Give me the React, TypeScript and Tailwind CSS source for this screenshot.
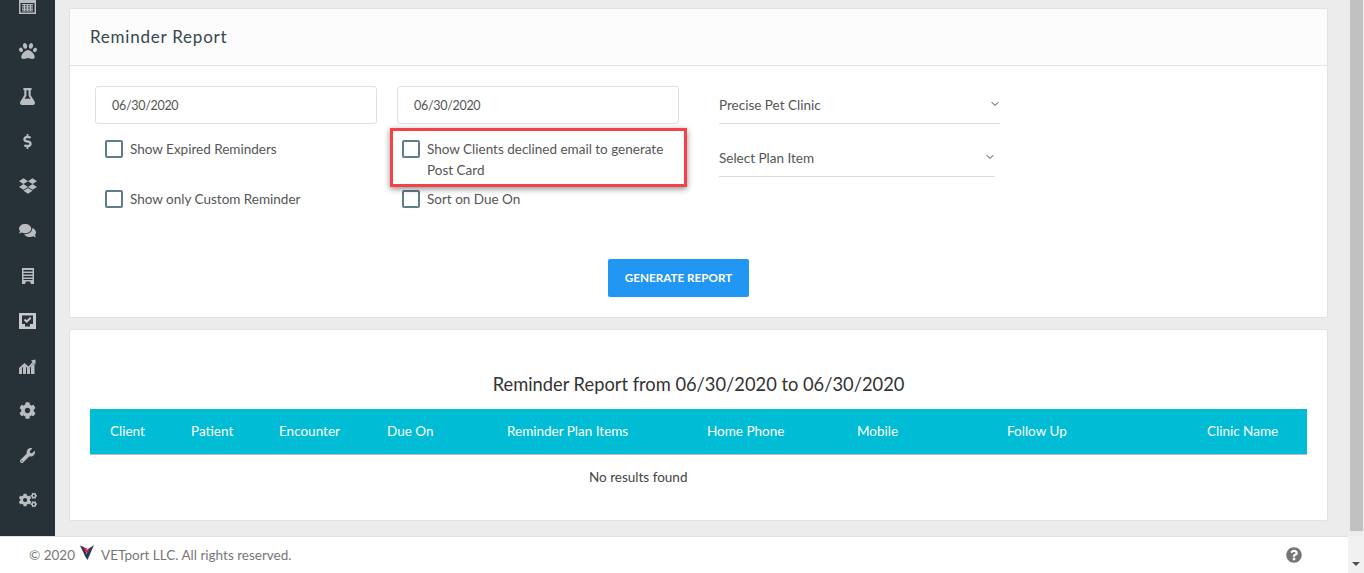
import { FaPaw, FaFlask, FaDollarSign, FaDropbox, FaComments, FaCog, FaWrench, FaCogs, FaQuestionCircle } from "react-icons/fa";
import { ChevronDown } from "lucide-react";
import type { ReactNode } from "react";

const font = "font-['Lato','Liberation_Sans',sans-serif]";

function CalendarIcon() {
  return (
    <svg width="17" height="16" viewBox="0 0 17 16" fill="#b9bdbf">
      <path d="M0 0h17v16H0z M1.500 5v9.500h14V5z" fillRule="evenodd" />
      <path d="M3 6h11v1.300H3zM3 8.200h11v1.300H3zM3 10.400h11v1.300H3zM3 12.600h11v1H3zM5 6h1v7.600H5zM8 6h1v7.600H8zM11 6h1v7.600h-1z" />
    </svg>
  );
}

function ReceiptIcon() {
  return (
    <svg width="12" height="16" viewBox="0 0 12 16" fill="#b9bdbf">
      <path d="M0 0h12v16H9l-1-2.500H4L3 16H0z M1.500 2V3.500h9V2z M1.500 5V6.500h9V5z M1.500 8V9.500h9V8z M1.500 11v1h9v-1z" fillRule="evenodd" />
    </svg>
  );
}

function CheckBoxIcon() {
  return (
    <svg width="17" height="16" viewBox="0 0 17 16">
      <path d="M0 0h17v16H0z" fill="#c6c9cb" />
      <path d="M3 2.500h11V11h-3v2.500H6V11H3z" fill="#263238" />
      <path d="M5.500 6.500l2.200 2.200 4-4" stroke="#c6c9cb" strokeWidth="2" fill="none" />
    </svg>
  );
}

function GrowthIcon() {
  return (
    <svg width="17" height="16" viewBox="0 0 17 16" fill="#b9bdbf">
      <path d="M0 16v-3.500l3-3V16zM4 16V8.500l1.500-1.300 1.500 1.300V16zM8 16V9.500l1.500 1.300L11 9.300V16zM12 16V8.300l3.500-3.500V16z" />
      <path d="M0 10l5.500-5 4 3.500L13.500 4 12 2.500 16.500 1.500V6.500L15 5l-5.500 6-4-3.500L0 12.500z" />
    </svg>
  );
}

function VetportLogo() {
  return (
    <svg width="14" height="15" viewBox="0 0 14 15" className="mb-[5px] mr-[2px]">
      <path d="M0 0.500L4 2 6.500 9 9 3.500 14 0 7.500 15 5.500 12z" fill="#27375f" />
      <path d="M2.500 2L7 3.500 6.500 5.500 8.500 3.500 10 3 7.500 8 6.500 8z" fill="#d8232a" />
    </svg>
  );
}

const navIcons: ReactNode[] = [
  <CalendarIcon />,
  <FaPaw size={18} />,
  <FaFlask size={17} />,
  <FaDollarSign size={15} />,
  <FaDropbox size={18} />,
  <FaComments size={17} />,
  <ReceiptIcon />,
  <CheckBoxIcon />,
  <GrowthIcon />,
  <FaCog size={17} />,
  <FaWrench size={15} />,
  <FaCogs size={18} />,
];

function Check({ label, className }: { label: ReactNode; className: string }) {
  return (
    <label className={`flex items-start gap-[7px] text-[13.5px] leading-[21px] text-[#555] ${className}`}>
      <span className="mt-[1px] h-[18px] w-[18px] shrink-0 rounded-[2px] border-2 border-[#607d8b]" />
      <span>{label}</span>
    </label>
  );
}

function DateBox() {
  return (
    <div className="flex h-[38px] items-center rounded-[3px] border border-[#e0e0e0] pl-[16px] pt-[2px] text-[12.5px] tracking-[-0.3px] text-[#555]">06/30/2020</div>
  );
}

function Select({ label, className }: { label: string; className: string }) {
  return (
    <div className={`flex h-[38px] items-center justify-between border-b border-[#dcdcdc] pt-[2px] text-[13.5px] text-[#555] ${className}`}>
      <span>{label}</span>
      <ChevronDown size={12} strokeWidth={2} className="mr-[-1px] mb-[3px] text-[#444]" />
    </div>
  );
}

const columns = [
  { name: "Client", width: "w-[81px]" },
  { name: "Patient", width: "w-[88px]" },
  { name: "Encounter", width: "w-[108px]" },
  { name: "Due On", width: "w-[120px]" },
  { name: "Reminder Plan Items", width: "w-[200px]" },
  { name: "Home Phone", width: "w-[150px]" },
  { name: "Mobile", width: "w-[150px]" },
  { name: "Follow Up", width: "w-[200px]" },
  { name: "Clinic Name", width: "w-[100px]" },
];

export default function App() {
  return (
    <div className={`flex h-[573px] w-[1364px] overflow-hidden bg-[#ececec] ${font}`}>
      <div className="flex min-w-0 flex-1 flex-col">
        <div className="flex min-h-0 flex-1">
          <nav className="flex w-[55px] shrink-0 flex-col items-center overflow-hidden bg-[#263238] text-[#b9bdbf]">
            <div className="mt-[-16px] flex flex-col items-center">
              {navIcons.map((icon, i) => (
                <div key={i} className="flex h-[44.9px] items-center justify-center">{icon}</div>
              ))}
            </div>
          </nav>
          <main className="flex min-w-0 flex-1 flex-col gap-[11px] pt-[8px] pl-[14px] pr-[20px]">
            <section className="rounded-[2px] border border-[#e2e2e2] bg-white">
              <header className="flex h-[57px] items-center border-b border-[#e2e2e2] bg-[#fcfcfc] pl-[20px] text-[17px] tracking-[0.77px] text-[#37474f]">Reminder Report</header>
              <div className="h-[251px] pt-[20px]">
                <div className="flex pl-[25px]">
                  <div className="flex w-[282px] flex-col">
                    <DateBox />
                    <div className="mt-[15px] flex flex-col gap-[29px]">
                      <Check label="Show Expired Reminders" className="pl-[10px]" />
                      <Check label="Show only Custom Reminder" className="pl-[10px]" />
                    </div>
                  </div>
                  <div className="relative ml-[20px] flex w-[282px] flex-col">
                    <DateBox />
                    <div className="mt-[15px] flex flex-col gap-[8px]">
                      <Check label="Show Clients declined email to generate Post Card" className="pl-[5px]" />
                      <Check label="Sort on Due On" className="pl-[5px]" />
                    </div>
                    <div className="absolute left-[-7px] top-[42px] h-[59px] w-[297px] border-[3px] border-[#f44248] shadow-[0_2px_6px_rgba(0,0,0,0.45)]" />
                  </div>
                  <div className="ml-[40px] flex flex-col gap-[15px]">
                    <Select label="Precise Pet Clinic" className="w-[281px]" />
                    <Select label="Select Plan Item" className="w-[276px]" />
                  </div>
                </div>
                <div className="mt-[49px] flex pl-[538px]">
                  <button className="h-[38px] w-[141px] rounded-[2px] bg-[#2196f3] text-[11.7px] font-bold text-white">GENERATE REPORT</button>
                </div>
              </div>
            </section>
            <section className="h-[192px] rounded-[2px] border border-[#e2e2e2] bg-white px-[20px] pt-[41px]">
              <h2 className="text-center text-[18.3px] leading-[26px] text-[#333]">Reminder Report from 06/30/2020 to 06/30/2020</h2>
              <div className="mt-[12px] flex h-[46px] items-center border-b border-[#bdbdbd] bg-[#00bcd4] pl-[20px] text-[13.5px] text-white">
                {columns.map((c) => (
                  <div key={c.name} className={`shrink-0 ${c.width}`}>{c.name}</div>
                ))}
              </div>
              <p className="mt-[12px] pl-[499px] text-[13.5px] leading-[21px] text-[#444]">No results found</p>
            </section>
          </main>
        </div>
        <footer className="flex h-[37px] shrink-0 items-center justify-between border-t border-[#e2e2e2] bg-white pl-[29px] pr-[46px] text-[13.5px] text-[#777]">
          <div className="flex items-center gap-[5px]">
            <span>© 2020</span>
            <VetportLogo />
            <span>VETport LLC. All rights reserved.</span>
          </div>
          <FaQuestionCircle size={16} className="text-[#757575]" />
        </footer>
      </div>
      <div className="flex w-[16px] shrink-0 flex-col bg-[#f1f1f1]">
        <div className="flex h-[536px] w-full bg-[#ececec] pl-[2px] pr-[1px]">
          <div className="h-[531px] w-full bg-[#c1c1c1]" />
        </div>
        <div className="flex flex-1 items-center justify-center pt-[18px]">
          <div className="h-0 w-0 border-x-[4px] border-t-[4px] border-x-transparent border-t-[#505050]" />
        </div>
      </div>
    </div>
  );
}
